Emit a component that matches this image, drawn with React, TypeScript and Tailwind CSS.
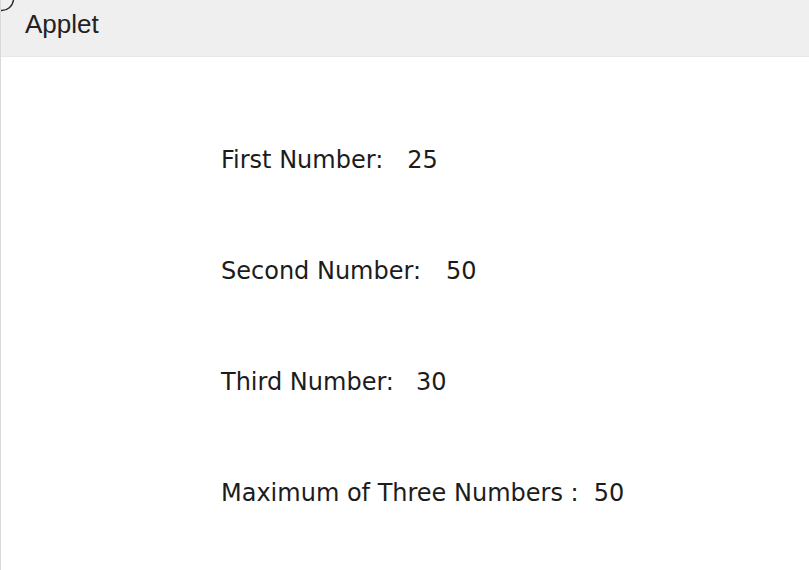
export default function App() {
  const rows = [
    { label: 'First Number:', value: '25', gap: 'ml-[24px]' },
    { label: 'Second Number:', value: '50', gap: 'ml-[25px]' },
    { label: 'Third Number:', value: '30', gap: 'ml-[22px]' },
    { label: 'Maximum of Three Numbers :', value: '50', gap: 'ml-[15px]' },
  ];

  return (
    <div className="relative w-[809px] h-[570px] bg-white border-l border-[#d9d9d9] overflow-hidden">
      <svg className="absolute left-0 top-0" width="16" height="14" viewBox="0 0 16 14">
        <path d="M0 10.5 A12 12 0 0 0 12.5 0" fill="none" stroke="#2a2a2a" strokeWidth="1.4" />
      </svg>
      <div className="h-[57px] bg-[#efefef] border-b border-[#e8e8e8] pl-[24px] pt-[9px]">
        <span className="text-[26px] leading-[30px] text-[#222] font-['Liberation_Sans',Arial,sans-serif]">
          Applet
        </span>
      </div>
      <div className="flex flex-col gap-[87px] pt-[91px] pl-[220px] font-['DejaVu_Sans',sans-serif] text-[24px] leading-6 text-[#1c1c1c]">
        {rows.map(r => (
          <div key={r.label} className="flex">
            <span>{r.label}</span>
            <span className={r.gap}>{r.value}</span>
          </div>
        ))}
      </div>
    </div>
  );
}
